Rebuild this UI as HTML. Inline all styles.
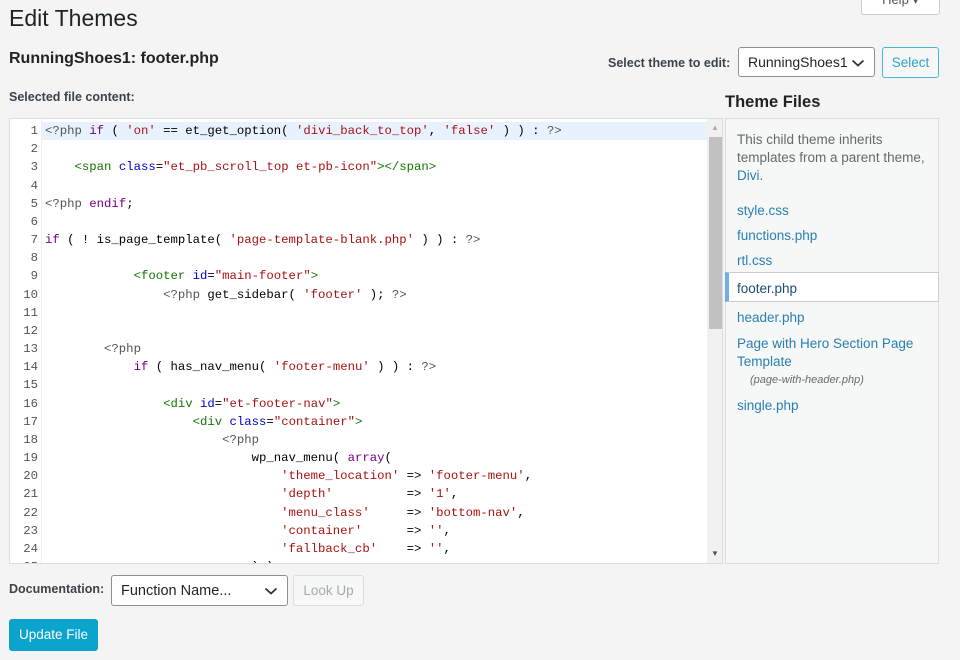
<!DOCTYPE html><html><head><style>
body{margin:0;width:960px;height:660px;background:#f4f4f4;font-family:"Liberation Sans",sans-serif;color:#1d2327;position:relative;overflow:hidden}
.a{position:absolute;white-space:nowrap}
#ed{position:absolute;left:9px;top:118px;width:714px;height:446px;background:#fff;border:1px solid #ddd;box-sizing:border-box;overflow:hidden}
.ln{position:absolute;left:0;width:28px;text-align:right;font:12.3px/18.17px "Liberation Mono",monospace;color:#555}
.cd{position:absolute;left:35px;font:12.3px/18.17px "Liberation Mono",monospace;color:#000;white-space:pre}
.k{color:#708}.s{color:#a11}.t{color:#170}.at{color:#00c}.m{color:#555}
.fl{color:#2a7fb0;font-size:13.5px;position:absolute;left:737px}
.chev{position:absolute;right:9px;top:11px}
</style></head><body>
<div class="a" style="left:9px;top:5px;font-size:23px;color:#1d2327">Edit Themes</div>
<div class="a" style="left:861px;top:-8px;width:77px;height:21px;border:1px solid #ccc;border-radius:3px;background:#fff;text-align:center;font-size:13px;color:#555;line-height:14px">Help ▾</div>
<div class="a" style="left:9px;top:50px;font-size:16px;font-weight:bold">RunningShoes1: footer.php</div>
<div class="a" style="left:9px;top:90px;font-size:12.5px;font-weight:bold;color:#3c434a">Selected file content:</div>
<div class="a" style="left:608px;top:56px;font-size:12.5px;font-weight:bold;color:#3c434a">Select theme to edit:</div>
<div class="a" style="left:738px;top:47px;width:137px;height:30px;border:1px solid #8c8f94;border-radius:3px;background:#fff;box-sizing:border-box;font-size:14px;line-height:29px;padding-left:9px">RunningShoes1<svg class="chev" width="14" height="8" viewBox="0 0 14 8"><path d="M1.5 1.5L7 6.5L12.5 1.5" fill="none" stroke="#333" stroke-width="1.8"/></svg></div>
<div class="a" style="left:882px;top:47px;width:57px;height:31px;border:1px solid #48b8d8;border-radius:3px;background:#f6f7f7;box-sizing:border-box;font-size:13.5px;line-height:29px;text-align:center;color:#2da2c8">Select</div>
<div class="a" style="left:725px;top:93px;font-size:16.5px;font-weight:bold;color:#1d2327">Theme Files</div>
<div id="ed">
<div style="position:absolute;left:32px;top:3px;width:665px;height:18px;background:#e8f2fe"></div>
<div style="position:absolute;left:31px;top:0;width:1px;height:446px;background:#eee"></div>
<div style="position:absolute;left:697px;top:0;width:16px;height:446px;background:#f1f1f1"></div>
<div style="position:absolute;left:699px;top:18px;width:13px;height:192px;background:#c1c1c1"></div>
<div style="position:absolute;left:701px;top:4px;font-size:8px;color:#aaa">▲</div>
<div style="position:absolute;left:701px;top:430px;font-size:8px;color:#555">▼</div>
<div class="ln" style="top:3px">1<br>2<br>3<br>4<br>5<br>6<br>7<br>8<br>9<br>10<br>11<br>12<br>13<br>14<br>15<br>16<br>17<br>18<br>19<br>20<br>21<br>22<br>23<br>24<br>25</div>
<div class="cd" style="top:3px"><span class="m">&lt;?php</span> <span class="k">if</span> ( <span class="s">'on'</span> == et_get_option( <span class="s">'divi_back_to_top'</span>, <span class="s">'false'</span> ) ) : <span class="m">?&gt;</span>

    <span class="t">&lt;span</span> <span class="at">class</span>=<span class="s">"et_pb_scroll_top et-pb-icon"</span><span class="t">&gt;&lt;/span&gt;</span>

<span class="m">&lt;?php</span> <span class="k">endif</span>;

<span class="k">if</span> ( ! is_page_template( <span class="s">'page-template-blank.php'</span> ) ) : <span class="m">?&gt;</span>

            <span class="t">&lt;footer</span> <span class="at">id</span>=<span class="s">"main-footer"</span><span class="t">&gt;</span>
                <span class="m">&lt;?php</span> get_sidebar( <span class="s">'footer'</span> ); <span class="m">?&gt;</span>


        <span class="m">&lt;?php</span>
            <span class="k">if</span> ( has_nav_menu( <span class="s">'footer-menu'</span> ) ) : <span class="m">?&gt;</span>

                <span class="t">&lt;div</span> <span class="at">id</span>=<span class="s">"et-footer-nav"</span><span class="t">&gt;</span>
                    <span class="t">&lt;div</span> <span class="at">class</span>=<span class="s">"container"</span><span class="t">&gt;</span>
                        <span class="m">&lt;?php</span>
                            wp_nav_menu( <span class="k">array</span>(
                                <span class="s">'theme_location'</span> =&gt; <span class="s">'footer-menu'</span>,
                                <span class="s">'depth'</span>          =&gt; <span class="s">'1'</span>,
                                <span class="s">'menu_class'</span>     =&gt; <span class="s">'bottom-nav'</span>,
                                <span class="s">'container'</span>      =&gt; <span class="s">''</span>,
                                <span class="s">'fallback_cb'</span>    =&gt; <span class="s">''</span>,
                            ) );</div>
</div>
<div class="a" style="left:725px;top:118px;width:214px;height:446px;background:#f6f7f7;border:1px solid #ddd;box-sizing:border-box"></div>
<div class="a" style="left:737px;top:131px;font-size:13.5px;line-height:18px;color:#646970;white-space:normal;width:195px">This child theme inherits templates from a parent theme, <span style="color:#2a7fb0">Divi</span>.</div>
<div class="fl" style="top:203px">style.css</div>
<div class="fl" style="top:228px">functions.php</div>
<div class="fl" style="top:253px">rtl.css</div>
<div class="a" style="left:725px;top:272px;width:214px;height:30px;background:#fff;border:1px solid #ccc;border-left:4px solid #72aee6;box-sizing:border-box"></div>
<div class="fl" style="top:281px;color:#1d4e70">footer.php</div>
<div class="fl" style="top:310px">header.php</div>
<div class="fl" style="top:335px;line-height:18px">Page with Hero Section Page<br>Template</div>
<div class="a" style="left:750px;top:374px;font-size:11px;font-style:italic;color:#646970">(page-with-header.php)</div>
<div class="fl" style="top:398px">single.php</div>
<div class="a" style="left:9px;top:582px;font-size:12.5px;font-weight:bold;color:#3c434a">Documentation:</div>
<div class="a" style="left:111px;top:575px;width:177px;height:31px;border:1px solid #8c8f94;border-radius:3px;background:#fff;box-sizing:border-box;font-size:14.5px;line-height:30px;padding-left:9px">Function Name...<svg class="chev" width="14" height="8" viewBox="0 0 14 8"><path d="M1.5 1.5L7 6.5L12.5 1.5" fill="none" stroke="#333" stroke-width="1.8"/></svg></div>
<div class="a" style="left:293px;top:575px;width:71px;height:31px;border:1px solid #ddd;border-radius:3px;background:#f6f7f7;box-sizing:border-box;font-size:13.5px;line-height:29px;text-align:center;color:#a7aaad">Look Up</div>
<div class="a" style="left:9px;top:619px;width:89px;height:32px;border-radius:3px;background:#0aa4cc;font-size:13.5px;line-height:32px;text-align:center;color:#fff">Update File</div>
</body></html>
